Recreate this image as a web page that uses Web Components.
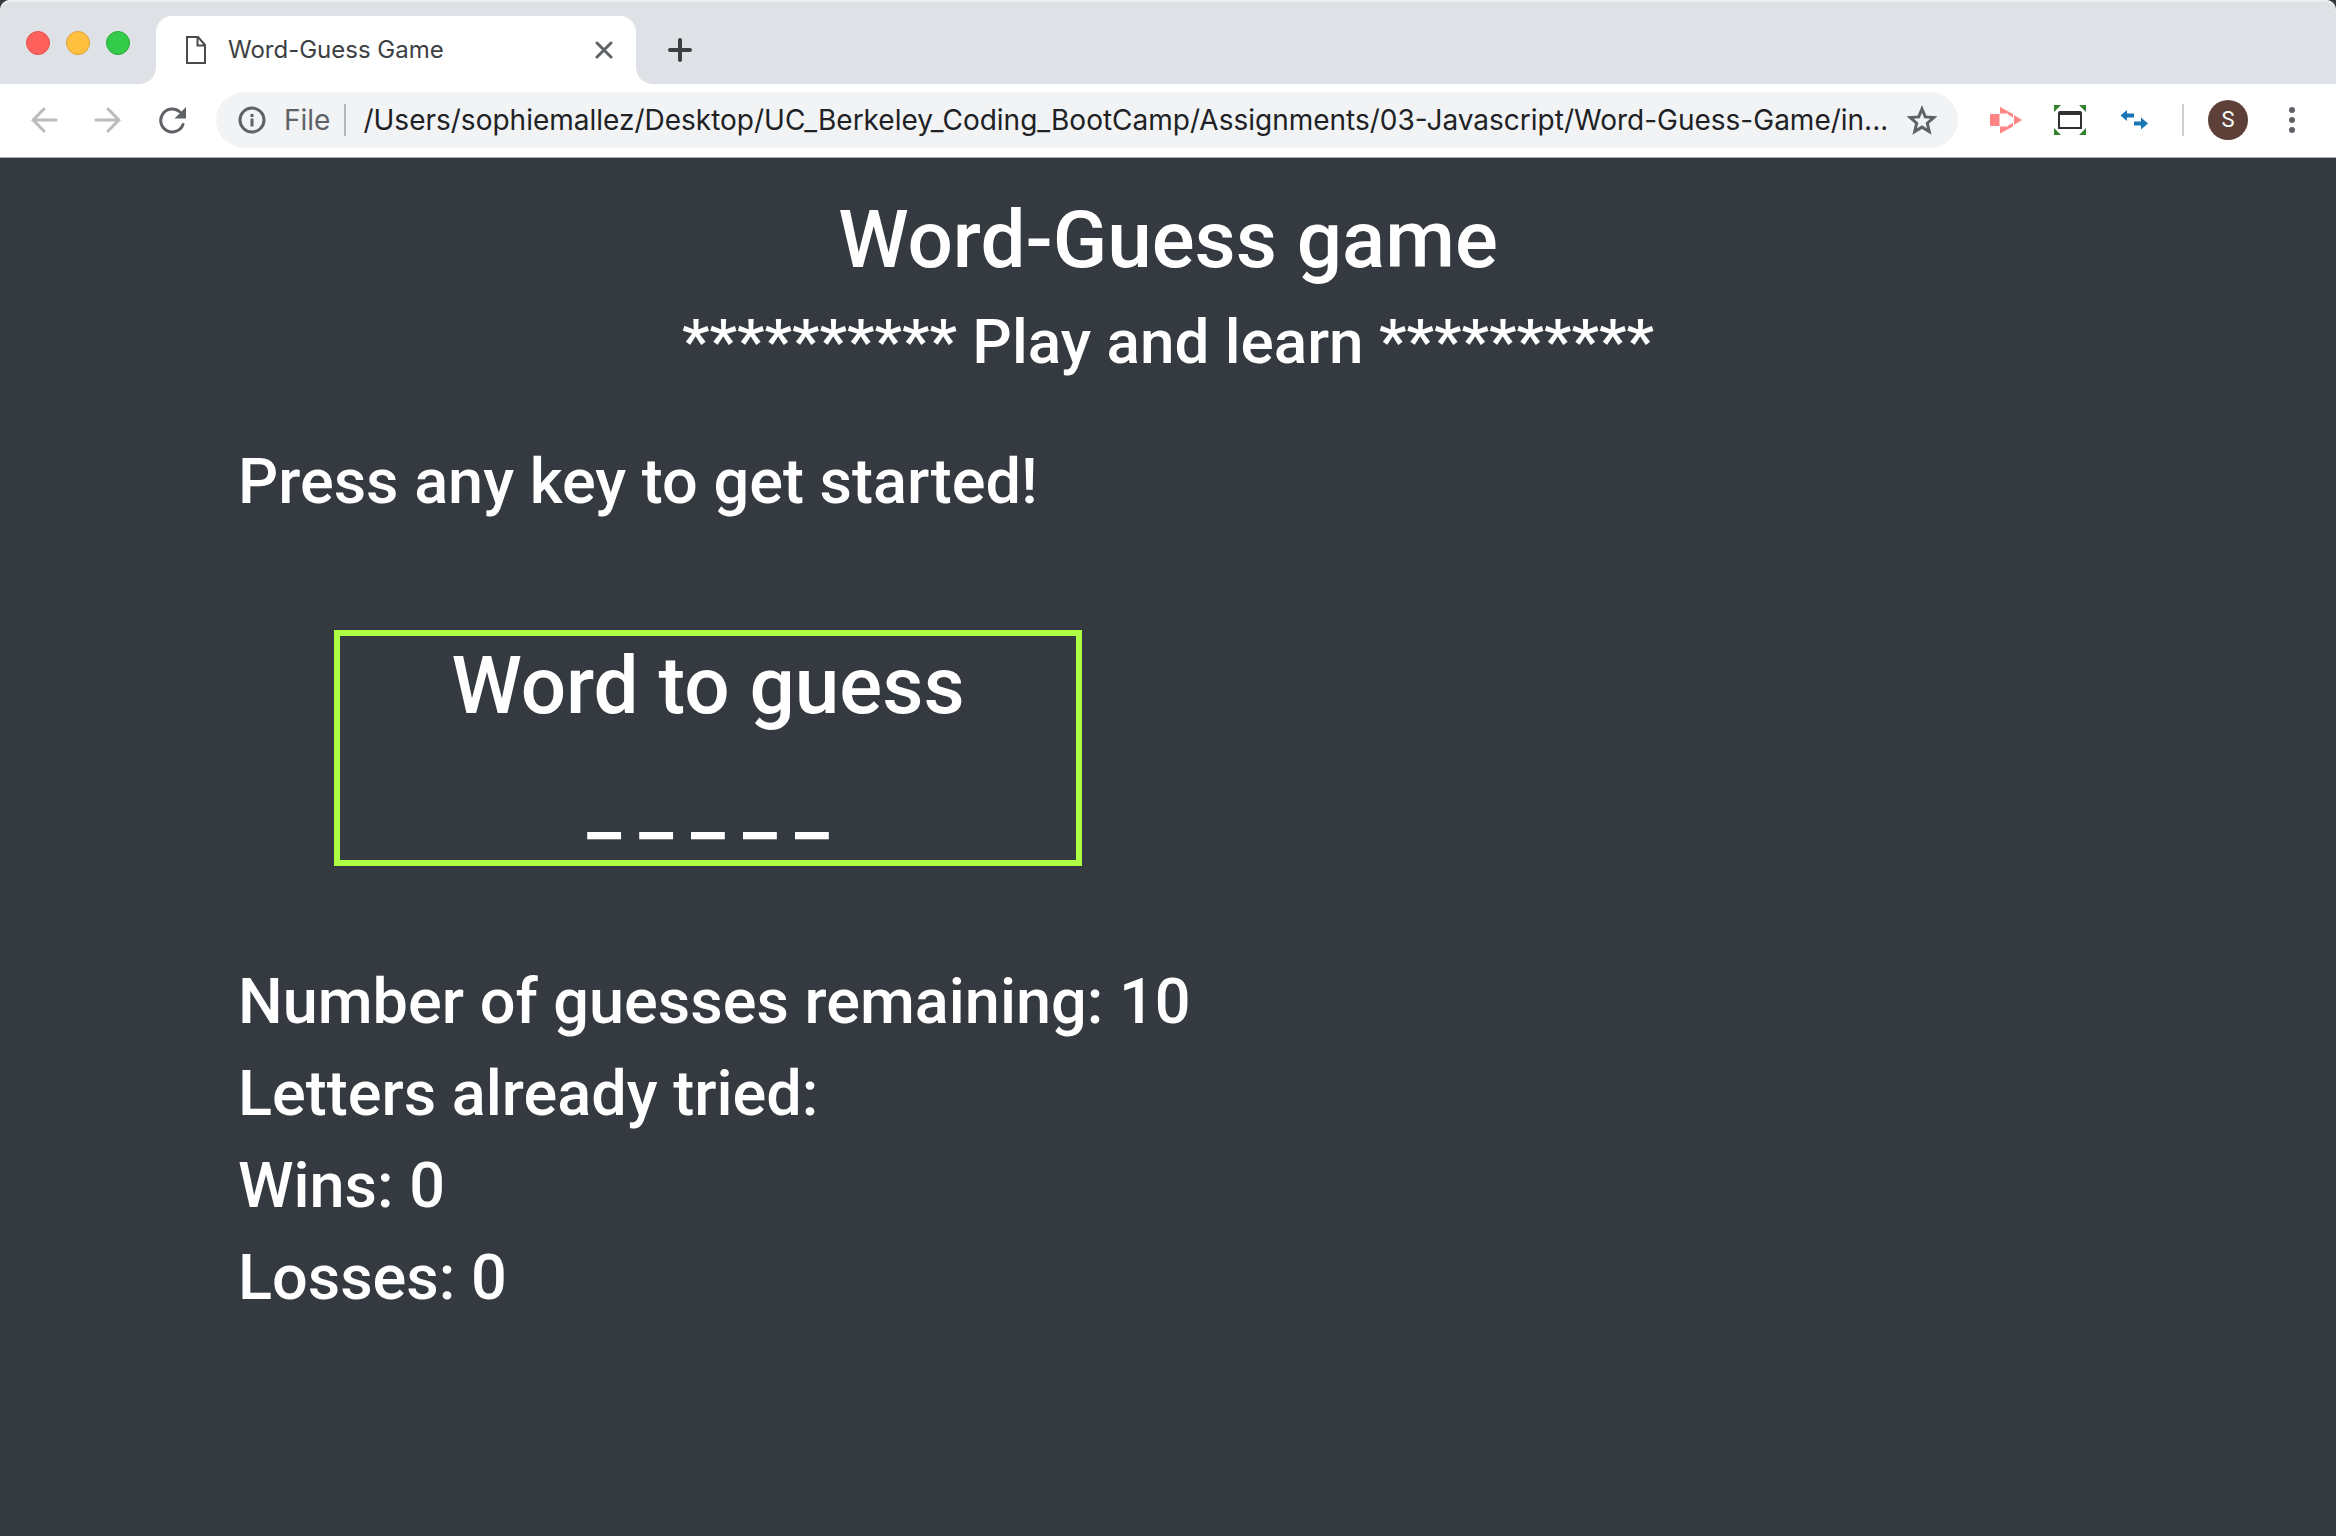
<!DOCTYPE html>
<html lang="en">
<head>
<meta charset="utf-8">
<title>Word-Guess Game</title>
<style>
  html, body { margin: 0; min-height: 100%; }
  body { background: #343a40; font-family: Inter, "Liberation Sans", sans-serif; }
</style>
</head>
<body>
<browser-window>
  <tab-strip slot="tabs">
    <browser-tab>Word-Guess Game</browser-tab>
  </tab-strip>
  <tool-bar slot="toolbar">
    <address-bar scheme="File" url="/Users/sophiemallez/Desktop/UC_Berkeley_Coding_BootCamp/Assignments/03-Javascript/Word-Guess-Game/in..."></address-bar>
  </tool-bar>
  <guess-game>
    <span slot="title">Word-Guess game</span>
    <span slot="subtitle">********** Play and learn **********</span>
    <span slot="prompt">Press any key to get started!</span>
    <word-board slot="board" word="_ _ _ _ _">Word to guess</word-board>
    <game-stat slot="stats" value="10">Number of guesses remaining:</game-stat>
    <game-stat slot="stats" value="">Letters already tried:</game-stat>
    <game-stat slot="stats" value="0">Wins:</game-stat>
    <game-stat slot="stats" value="0">Losses:</game-stat>
  </guess-game>
</browser-window>

<script>
const BUTTON_RESET = `
  button { appearance: none; border: 0; margin: 0; padding: 0; background: none; font: inherit; color: inherit;
           display: flex; align-items: center; justify-content: center; cursor: pointer; }
  svg { display: block; }
`;

function component(name, markup, setup) {
  customElements.define(name, class extends HTMLElement {
    constructor() {
      super();
      this.attachShadow({ mode: "open" }).innerHTML = markup;
    }
    connectedCallback() {
      if (setup) setup(this, this.shadowRoot);
    }
  });
}

component("browser-window", `
  <style>
    :host { display: flex; flex-direction: column; min-height: 100vh; background: #343a40; }
    header { background: #3a3a3c; }
    .chrome { border-radius: 10px 10px 0 0; overflow: hidden; background: #dee1e6; box-shadow: inset 0 2px #eceef1; }
  </style>
  <header><div class="chrome"><slot name="tabs"></slot><slot name="toolbar"></slot></div></header>
  <slot></slot>
`);

component("tab-strip", `
  <style>
    ${BUTTON_RESET}
    :host { display: flex; height: 84px; color: #3c4043; }
    .lights { display: flex; gap: 16px; padding: 31px 26px 0; }
    .light { width: 24px; height: 24px; border-radius: 50%; box-sizing: border-box; }
    .close { background: #ff605c; border: 1px solid #e2504a; }
    .min { background: #ffbf3f; border: 1px solid #dfa133; }
    .max { background: #33cb49; border: 1px solid #27ac38; }
    .add { width: 56px; height: 68px; margin: 16px 0 0 16px; }
  </style>
  <div class="lights">
    <button class="light close" aria-label="Close window"></button>
    <button class="light min" aria-label="Minimise window"></button>
    <button class="light max" aria-label="Zoom window"></button>
  </div>
  <slot></slot>
  <button class="add" aria-label="New tab">
    <svg width="24" height="24" viewBox="0 0 24 24" fill="none" stroke="#3c4043" stroke-width="4" stroke-linecap="round"><path d="M12 2v20M2 12h20"/></svg>
  </button>
`);

component("browser-tab", `
  <style>
    ${BUTTON_RESET}
    :host { display: flex; width: 480px; height: 68px; margin-top: 16px; box-sizing: border-box; align-items: center;
            position: relative; padding: 0 20px 0 29px; background: #fff; border-radius: 16px 16px 0 0; color: #3c4043; }
    :host::before, :host::after { content: ""; position: absolute; bottom: 0; width: 16px; height: 16px; }
    :host::before { right: 100%; background: radial-gradient(circle at 0 0, transparent 15.5px, #fff 16px); }
    :host::after { left: 100%; background: radial-gradient(circle at 100% 0, transparent 15.5px, #fff 16px); }
    .label { flex: 1; padding-left: 21px; font-size: 24px; line-height: 32px; white-space: nowrap; }
    button { width: 24px; height: 24px; }
  </style>
  <svg width="22" height="28" viewBox="0 0 22 28" fill="none" stroke="#4a4a4a" stroke-width="2"><path d="M2 1h11l7 8v18H2z"/><path d="M12.500 1v8.500H20"/></svg>
  <span class="label"><slot></slot></span>
  <button aria-label="Close tab">
    <svg width="18" height="18" viewBox="0 0 18 18" fill="none" stroke="#5f6368" stroke-width="3" stroke-linecap="round"><path d="M2 2l14 14M16 2L2 16"/></svg>
  </button>
`);

component("tool-bar", `
  <style>
    ${BUTTON_RESET}
    :host { display: flex; align-items: center; height: 74px; box-sizing: border-box; padding: 0 12px 2px;
            background: #fff; border-bottom: 1px solid #a9abae; }
    nav, .tools { display: flex; align-items: center; }
    nav button, .tools button { width: 64px; height: 56px; }
    ::slotted(address-bar) { flex: 1; margin: 0 16px 0 12px; }
    .rule { width: 2px; height: 32px; margin: 0 12px 0 16px; background: #cfd0d2; }
    .avatar { width: 40px; height: 40px; border-radius: 50%; background: #5d4037; color: #fff;
              font: 22px/40px Roboto, sans-serif; text-align: center; }
  </style>
  <nav>
    <button aria-label="Back"><svg width="28" height="28" viewBox="0 0 28 28" fill="none" stroke="#babcbe" stroke-width="3" stroke-linecap="round"><path d="M26 14H3M14 3L3 14l11 11"/></svg></button>
    <button aria-label="Forward"><svg width="28" height="28" viewBox="0 0 28 28" fill="none" stroke="#babcbe" stroke-width="3" stroke-linecap="round"><path d="M2 14h23M14 3l11 11-11 11"/></svg></button>
    <button aria-label="Reload"><svg width="28" height="28" viewBox="0 0 28 28"><path d="M25 18.500A11.500 11.500 0 1 1 22 6" fill="none" stroke="#5f6368" stroke-width="3" stroke-linecap="round"/><path d="M28 1v11.500H16.500z" fill="#5f6368"/></svg></button>
  </nav>
  <slot></slot>
  <div class="tools">
    <button aria-label="Screencast extension"><svg width="32" height="28" viewBox="0 0 32 28" fill="#ff8584"><path d="M0 9Q0 8 1 8h8.500v12H1q-1 0-1-1z"/><path d="M10 1L23 8v4l-2.500-2.500v1l-3-3H10z"/><path d="M10 27.500L23 20.500v-4l-2.500 2.500v-1.500l-3 3H10z"/><path d="M24 9L32 14l-8 5z"/></svg></button>
    <button aria-label="Window resizer extension"><svg width="32" height="30" viewBox="0 0 32 30"><path d="M0 0h7L0 7zM32 0h-7l7 7zM0 30h7l-7-7zM32 30h-7l7-7z" fill="#31802c"/><path d="M4 24V8q0-2 2-2h20q2 0 2 2v16z" fill="#303035"/><path d="M6 10h20v12H6z" fill="#fff"/></svg></button>
    <button aria-label="Switch extension"><svg width="28" height="20" viewBox="0 0 28 20" fill="#1976b5"><path d="M0.500 5.500L7 0v3.500h7v4H7V11z"/><path d="M28 13.500L21 19.500v-4h-7v-4h7V7.500z"/></svg></button>
    <span class="rule"></span>
    <button aria-label="Profile"><span class="avatar">S</span></button>
    <button aria-label="Menu"><svg width="6" height="26" viewBox="0 0 6 26" fill="#5f6368"><circle cx="3" cy="3" r="3"/><circle cx="3" cy="13" r="3"/><circle cx="3" cy="23" r="3"/></svg></button>
  </div>
`);

component("address-bar", `
  <style>
    ${BUTTON_RESET}
    :host { display: flex; align-items: center; min-width: 0; height: 56px; border-radius: 28px; background: #f1f3f4;
            font-size: 28px; line-height: 36px; color: #202124; }
    .info { margin-left: 22px; }
    label { margin-left: 18px; color: #5f6368; }
    .rule { width: 2px; height: 32px; margin: 0 17px 0 14px; background: #b4b6b9; }
    input { flex: 1; min-width: 0; border: 0; padding: 0; background: none; font: inherit; color: inherit; outline: 0; }
    .star { width: 72px; height: 56px; }
  </style>
  <button class="info" aria-label="Page information"><svg width="28" height="28" viewBox="0 0 28 28"><circle cx="14" cy="14" r="12" fill="none" stroke="#5f6368" stroke-width="3"/><path d="M12.500 12.500h3v8h-3zM12.500 8h3v3h-3z" fill="#5f6368"/></svg></button>
  <label for="url"></label>
  <span class="rule"></span>
  <input id="url" type="text" spellcheck="false">
  <button class="star" aria-label="Bookmark this page"><svg width="30" height="30" viewBox="0 0 30 30" fill="none" stroke="#5f6368" stroke-width="3"><path d="M15 4l3.300 7.900 8.500.7-6.500 5.600 2 8.300-7.300-4.400-7.300 4.400 2-8.300-6.500-5.600 8.500-.7z"/></svg></button>
`, (host, root) => {
  root.querySelector("label").textContent = host.getAttribute("scheme");
  root.querySelector("input").value = host.getAttribute("url");
});

component("guess-game", `
  <style>
    :host { display: block; color: #fff; font-family: Roboto, Inter, sans-serif; font-weight: 500; }
    main { max-width: 1860px; margin: 0 auto; padding: 34px 30px; }
    h1, h2, p { margin: 0 0 16px; font-weight: 500; }
    h1 { font-size: 80px; line-height: 96px; text-align: center; }
    h2 { font-size: 62px; line-height: 76px; text-align: center; }
    p, .stats { font-size: 63px; line-height: 76px; }
    p { margin-top: 64px; }
    .board { padding: 94px 96px 98px; }
    .stats { display: flex; flex-direction: column; gap: 16px; }
  </style>
  <main>
    <h1><slot name="title"></slot></h1>
    <h2><slot name="subtitle"></slot></h2>
    <p><slot name="prompt"></slot></p>
    <div class="board"><slot name="board"></slot></div>
    <div class="stats"><slot name="stats"></slot></div>
  </main>
`);

component("word-board", `
  <style>
    :host { display: block; box-sizing: border-box; max-width: 748px; padding: 2px 0 6px;
            border: 6px solid #adff45; text-align: center; }
    h2, output { display: block; margin: 0; line-height: 96px; }
    h2 { margin-bottom: 24px; font-size: 80px; font-weight: 500; }
    output { font-family: Inter, sans-serif; font-size: 72px; font-weight: 600; }
  </style>
  <h2><slot></slot></h2>
  <output></output>
`, (host, root) => {
  root.querySelector("output").textContent = host.getAttribute("word");
});

component("game-stat", `
  <style>:host { display: block; }</style>
  <slot></slot> <span></span>
`, (host, root) => {
  root.querySelector("span").textContent = host.getAttribute("value");
});
</script>
</body>
</html>
